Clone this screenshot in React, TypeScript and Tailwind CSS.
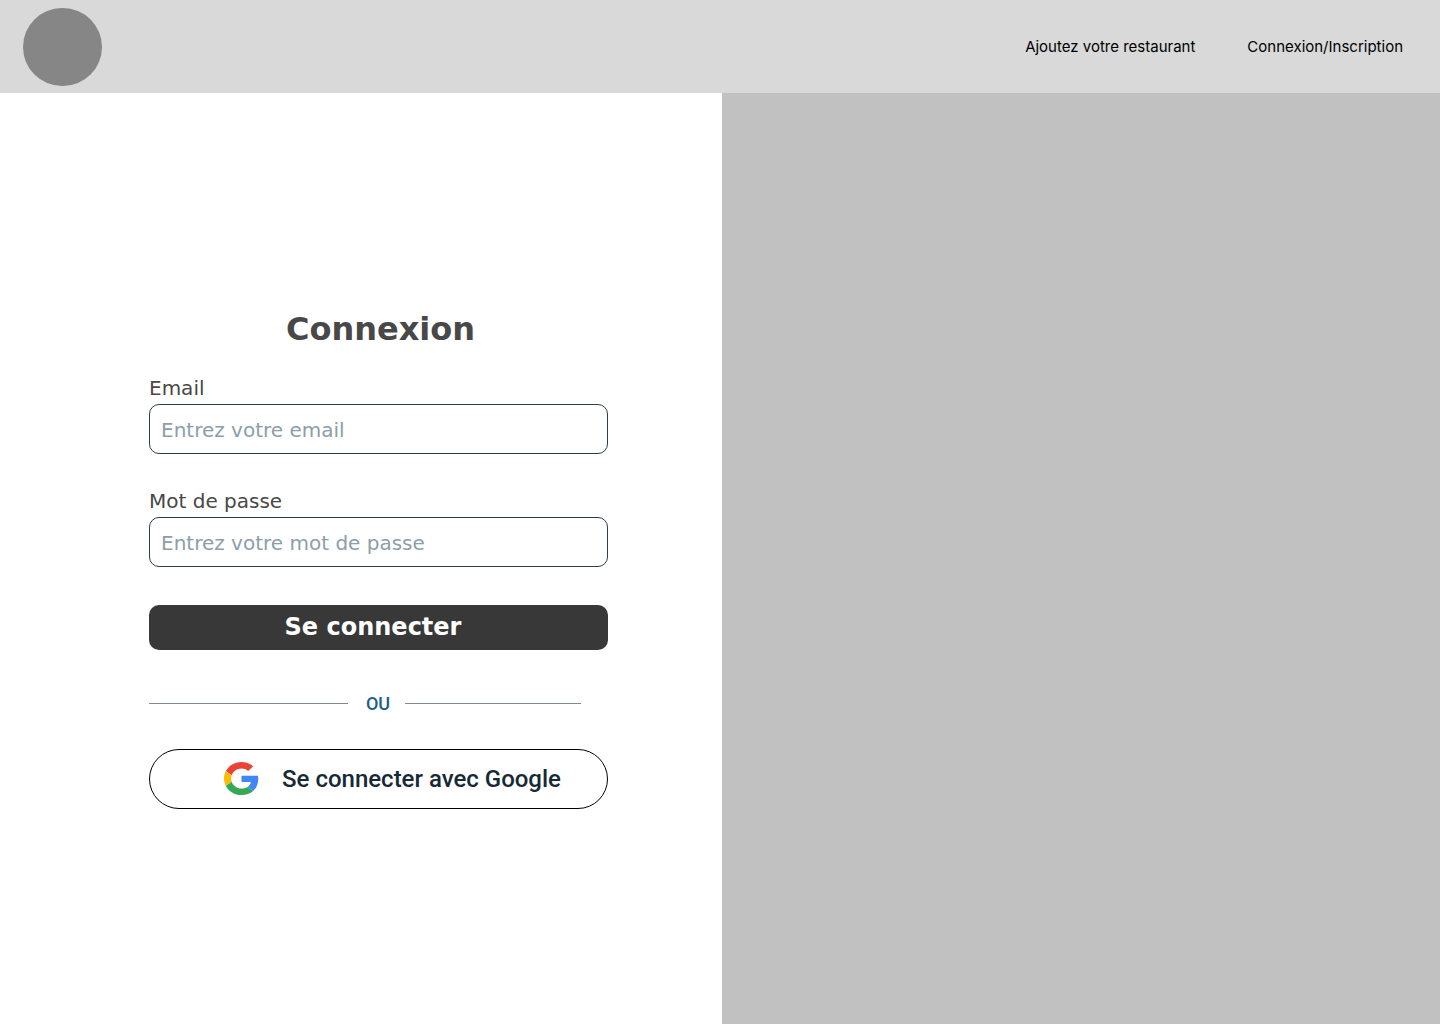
import React from "react";

function GoogleLogo() {
  return (
    <svg viewBox="0 0 48 48" preserveAspectRatio="none" className="h-[33px] w-[35px] shrink-0" aria-hidden="true">
      <path fill="#EA4335" d="M24 9.5c3.54 0 6.71 1.22 9.21 3.6l6.85-6.85C35.9 2.38 30.47 0 24 0 14.62 0 6.51 5.38 2.56 13.22l7.98 6.19C12.43 13.72 17.74 9.5 24 9.5z" />
      <path fill="#4285F4" d="M46.98 24.55c0-1.57-.15-3.09-.38-4.55H24v9.02h12.94c-.58 2.96-2.26 5.48-4.78 7.18l7.73 6c4.51-4.18 7.09-10.36 7.09-17.65z" />
      <path fill="#FBBC05" d="M10.53 28.59c-.48-1.45-.76-2.99-.76-4.59s.27-3.14.76-4.59l-7.98-6.19C.92 16.46 0 20.12 0 24c0 3.88.92 7.54 2.56 10.78l7.97-6.19z" />
      <path fill="#34A853" d="M24 48c6.48 0 11.93-2.13 15.89-5.81l-7.73-6c-2.15 1.45-4.92 2.3-8.16 2.3-6.26 0-11.57-4.22-13.47-9.91l-7.98 6.19C6.51 42.62 14.62 48 24 48z" />
    </svg>
  );
}

type FieldProps = { id: string; label: string; type: string; placeholder: string };

function Field({ id, label, type, placeholder }: FieldProps) {
  return (
    <div className="flex flex-col gap-1">
      <label htmlFor={id} className="text-xl leading-6 text-[#484848]">{label}</label>
      <input
        id={id}
        type={type}
        placeholder={placeholder}
        className="h-[50px] w-full rounded-[10px] border border-[#2c3e49] bg-white px-[11px] pt-0.5 text-xl text-[#484848] placeholder:text-[#8c9ea8]"
      />
    </div>
  );
}

export default function App() {
  return (
    <div className="flex min-h-screen flex-col bg-white">
      <header className="flex items-center justify-between bg-[#d9d9d9] pt-2 pr-[37px] pb-[7px] pl-[23px]">
        <a href="#" aria-label="Accueil" className="h-[78px] w-[79px] rounded-full bg-[#868686]" />
        <nav className="flex gap-[52px] font-['Inter',sans-serif] text-[15px] text-black">
          <a href="#">Ajoutez votre restaurant</a>
          <a href="#">Connexion/Inscription</a>
        </nav>
      </header>
      <main className="grid flex-1 grid-cols-[361fr_359fr]">
        <section className="flex flex-col justify-center pr-[114px] pl-[149px] font-['DejaVu_Sans',sans-serif]">
          <form className="flex flex-col">
            <h1 className="pl-1 text-center text-[32px] leading-10 font-bold text-[#484848]">Connexion</h1>
            <div className="mt-[27px] flex flex-col gap-[35px]">
              <Field id="email" label="Email" type="email" placeholder="Entrez votre email" />
              <Field id="password" label="Mot de passe" type="password" placeholder="Entrez votre mot de passe" />
            </div>
            <button type="submit" className="mt-[38px] h-[45px] rounded-[10px] bg-[#383838] pr-[11px] text-2xl font-bold text-white">
              Se connecter
            </button>
            <div className="mt-10 flex items-center pr-[27px] font-['Roboto',sans-serif] text-lg font-medium text-[#1b5e8c]">
              <span className="h-px flex-[199] bg-[#7e8a92]" />
              <span className="pr-[15px] pl-[18px]">OU</span>
              <span className="h-px flex-[176] bg-[#7e8a92]" />
            </div>
            <button type="button" className="mt-[31px] flex h-[60px] items-center justify-center gap-[23px] rounded-full border border-black pl-7 font-['Roboto',sans-serif] text-2xl font-medium text-[#162936]">
              <GoogleLogo />
              Se connecter avec Google
            </button>
          </form>
        </section>
        <aside className="bg-[#c1c1c1]" />
      </main>
    </div>
  );
}
